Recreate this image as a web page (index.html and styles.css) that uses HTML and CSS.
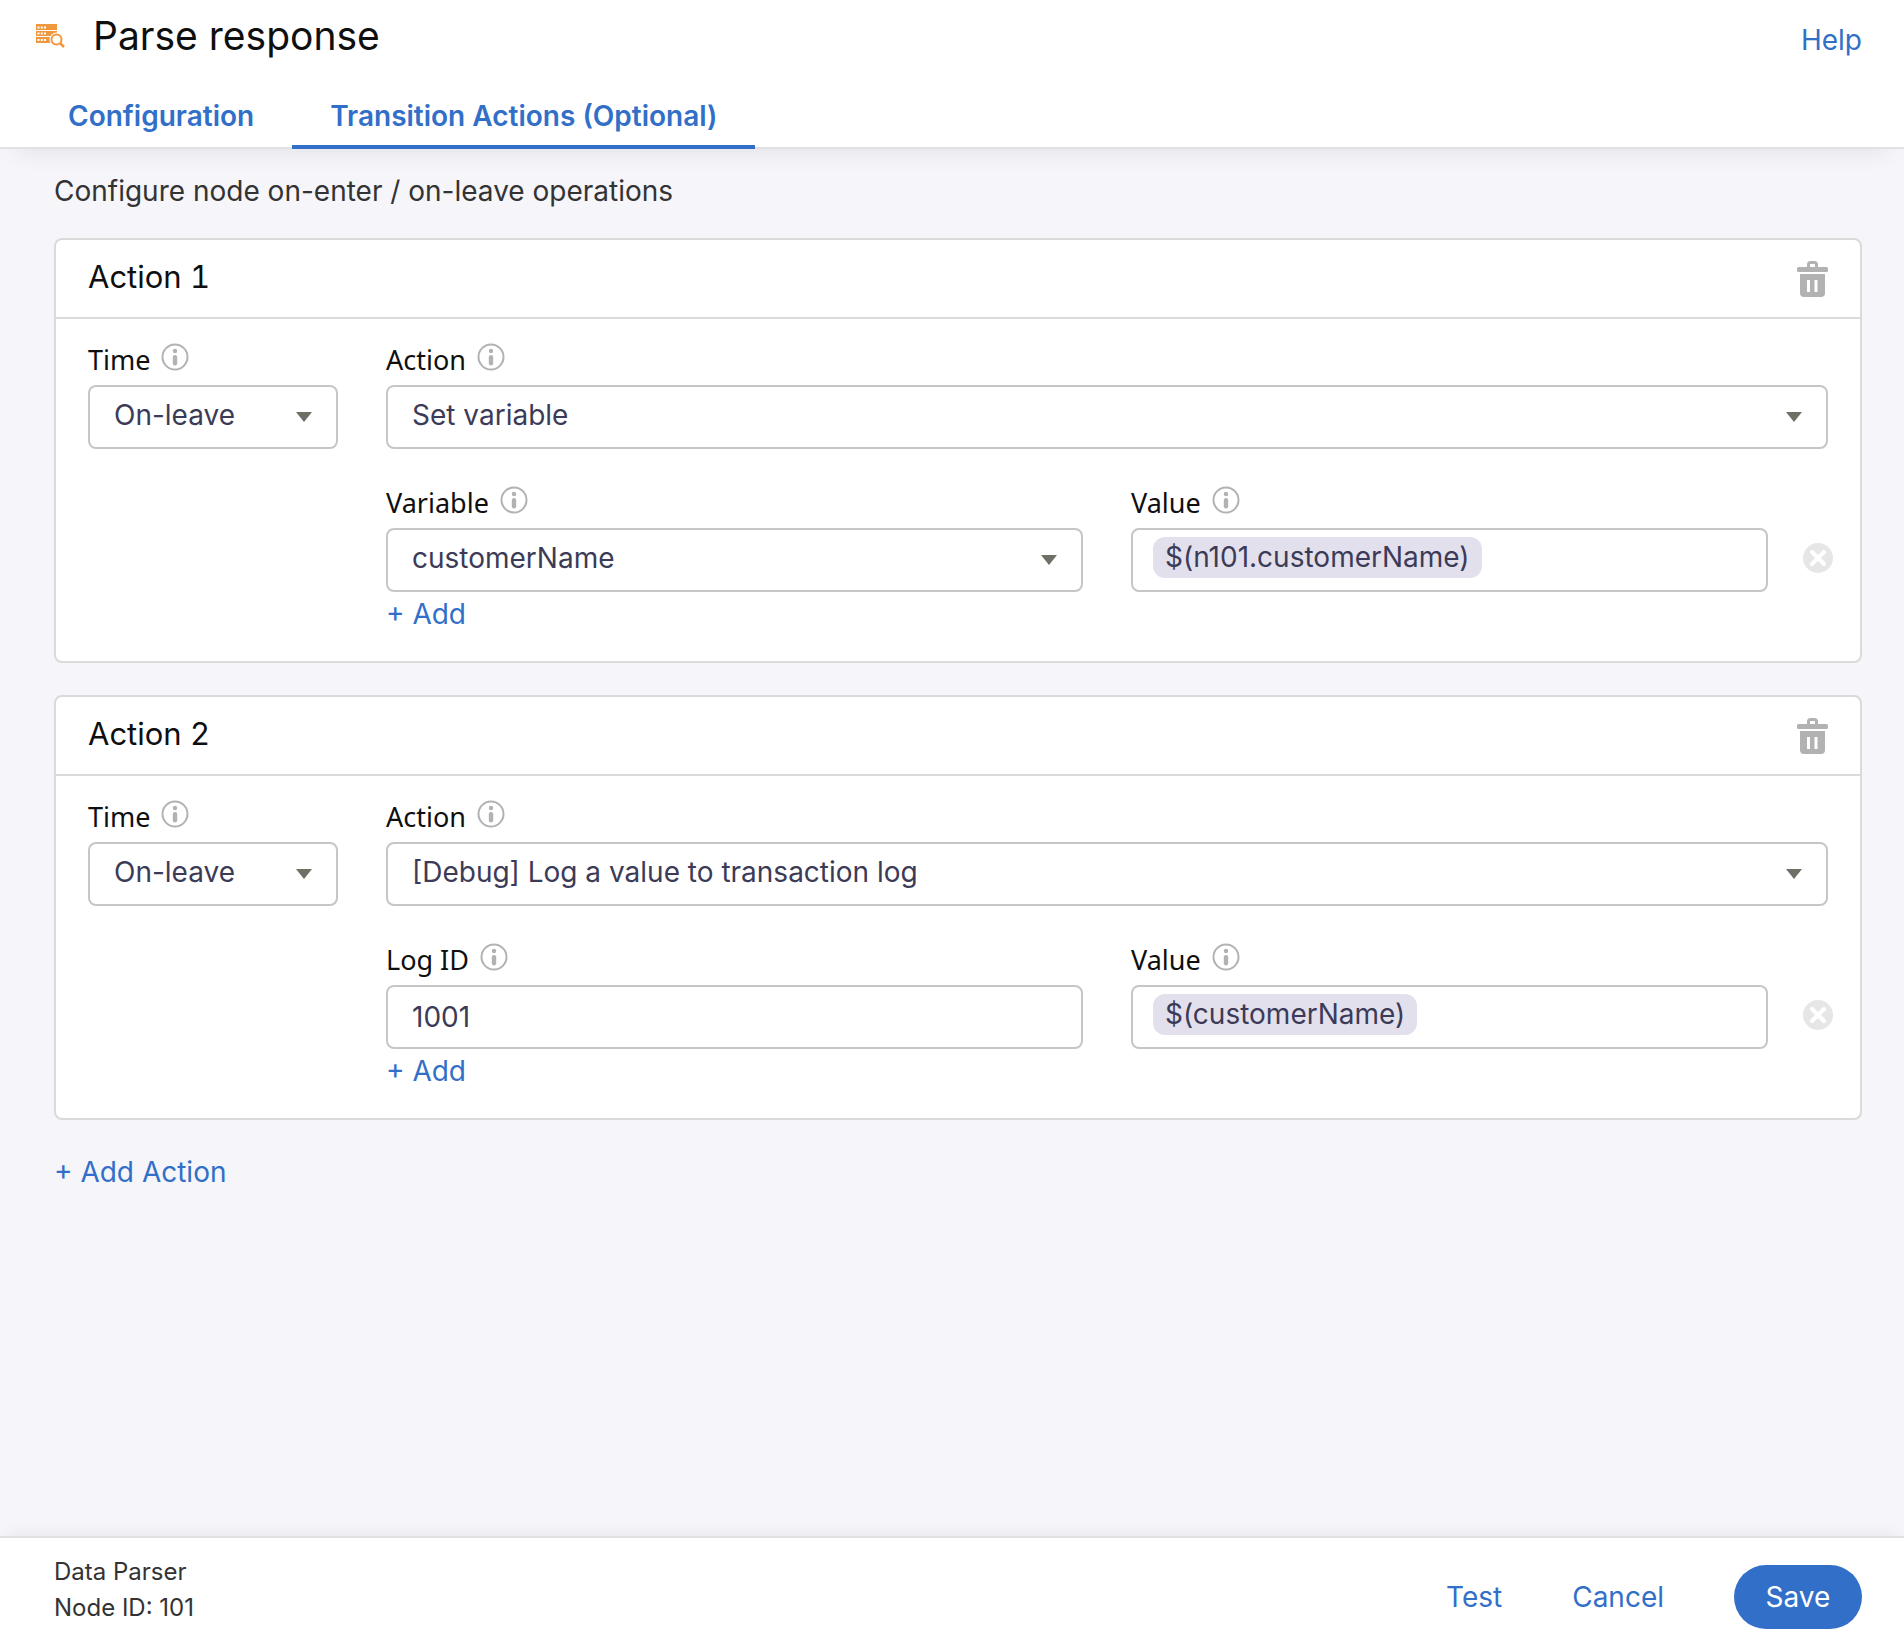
FILE: index.html
```html
<!DOCTYPE html>
<html lang="en">
<head>
<meta charset="utf-8">
<meta name="viewport" content="width=device-width, initial-scale=1">
<title>Parse response</title>
<link rel="stylesheet" href="styles.css">
</head>
<body>
<svg class="sprite" aria-hidden="true">
  <symbol id="icon-info" viewBox="0 0 28 28">
    <circle cx="14" cy="14" r="12.5" fill="none" stroke="currentColor" stroke-width="2"/>
    <circle cx="14" cy="8" r="2.2" fill="currentColor"/>
    <rect x="11.8" y="12" width="4.4" height="10.5" rx="2.2" fill="currentColor"/>
  </symbol>
  <symbol id="icon-caret" viewBox="0 0 16 10">
    <path d="M0 0h16L8 10z" fill="currentColor"/>
  </symbol>
  <symbol id="icon-trash" viewBox="0 0 31 36">
    <path fill="currentColor" fill-rule="evenodd" d="M1.5 6H10V3.500Q10 0 13.500 0H17.500Q21 0 21 3.500V6H29.500Q31 6 31 7.500V9.500Q31 11 29.500 11H1.500Q0 11 0 9.500V7.500Q0 6 1.500 6ZM13 6H18V3H13ZM3 13H28V32Q28 36 24 36H7Q3 36 3 32ZM10 19V31H13V19ZM17.500 19V31H20.500V19Z"/>
  </symbol>
  <symbol id="icon-remove" viewBox="0 0 30 30">
    <circle cx="15" cy="15" r="15" fill="currentColor"/>
    <path d="M9 9l12 12M21 9L9 21" stroke="#fff" stroke-width="4.200" stroke-linecap="round"/>
  </symbol>
</svg>

<div class="page">
  <header class="header">
    <div class="header-top">
      <svg class="node-icon" viewBox="0 0 29 24" aria-hidden="true">
        <path fill="#f0983e" d="M0 0h21v6H0zM0 7h21v3.500A7 7 0 0 0 15 12H0zM0 13h14.500a7 7 0 0 0 .5 6H0z"/>
        <path fill="#fff" d="M1.500 2.500h2v2h-2zM4.800 2.500h2v2h-2zM8 2.500h2v2H8zM1.500 8.500h2v2h-2zM4.800 8.500h2v2h-2zM8 8.500h2v2H8zM1.500 15h2v2h-2zM4.800 15h2v2h-2zM8 15h2v2H8z"/>
        <circle cx="20.500" cy="15.500" r="7" fill="#fff"/>
        <circle cx="20.500" cy="15.500" r="5" fill="none" stroke="#f0983e" stroke-width="2"/>
        <path d="M24 19l4 4" stroke="#f0983e" stroke-width="2.500"/>
      </svg>
      <h1 class="title">Parse response</h1>
      <a class="link help" href="#help">Help</a>
    </div>
    <nav class="tabs">
      <a class="tab" href="#configuration">Configuration</a>
      <a class="tab tab-active" href="#transition" aria-current="page">Transition Actions (Optional)</a>
    </nav>
  </header>

  <main class="main">
    <p class="intro">Configure node on-enter / on-leave operations</p>

    <section class="card">
      <div class="card-head">
        <h2 class="card-title">Action 1</h2>
        <button class="icon-button" type="button" aria-label="Delete action 1"><svg class="trash"><use href="#icon-trash"/></svg></button>
      </div>
      <div class="card-body">
        <div class="field">
          <div class="label-row"><label for="time1">Time</label><svg class="info"><use href="#icon-info"/></svg></div>
          <div class="select-wrap">
            <select class="control select" id="time1"><option>On-leave</option></select>
            <svg class="caret"><use href="#icon-caret"/></svg>
          </div>
        </div>
        <div class="field">
          <div class="label-row"><label for="action1">Action</label><svg class="info"><use href="#icon-info"/></svg></div>
          <div class="select-wrap">
            <select class="control select" id="action1"><option>Set variable</option></select>
            <svg class="caret"><use href="#icon-caret"/></svg>
          </div>
        </div>
        <div class="params">
          <div class="pair">
            <div class="field">
              <div class="label-row"><label for="var1">Variable</label><svg class="info"><use href="#icon-info"/></svg></div>
              <div class="select-wrap">
                <select class="control select" id="var1"><option>customerName</option></select>
                <svg class="caret"><use href="#icon-caret"/></svg>
              </div>
            </div>
            <div class="field">
              <div class="label-row"><span id="value1">Value</span><svg class="info"><use href="#icon-info"/></svg></div>
              <div class="control tokens" role="textbox" tabindex="0" aria-labelledby="value1"><span class="token">$(n101.customerName)</span></div>
            </div>
            <button class="icon-button remove" type="button" aria-label="Remove"><svg class="cross"><use href="#icon-remove"/></svg></button>
          </div>
          <button class="link add" type="button">+ Add</button>
        </div>
      </div>
    </section>

    <section class="card">
      <div class="card-head">
        <h2 class="card-title">Action 2</h2>
        <button class="icon-button" type="button" aria-label="Delete action 2"><svg class="trash"><use href="#icon-trash"/></svg></button>
      </div>
      <div class="card-body">
        <div class="field">
          <div class="label-row"><label for="time2">Time</label><svg class="info"><use href="#icon-info"/></svg></div>
          <div class="select-wrap">
            <select class="control select" id="time2"><option>On-leave</option></select>
            <svg class="caret"><use href="#icon-caret"/></svg>
          </div>
        </div>
        <div class="field">
          <div class="label-row"><label for="action2">Action</label><svg class="info"><use href="#icon-info"/></svg></div>
          <div class="select-wrap">
            <select class="control select" id="action2"><option>[Debug] Log a value to transaction log</option></select>
            <svg class="caret"><use href="#icon-caret"/></svg>
          </div>
        </div>
        <div class="params">
          <div class="pair">
            <div class="field">
              <div class="label-row"><label for="log2">Log ID</label><svg class="info"><use href="#icon-info"/></svg></div>
              <input class="control" id="log2" type="text" value="1001">
            </div>
            <div class="field">
              <div class="label-row"><span id="value2">Value</span><svg class="info"><use href="#icon-info"/></svg></div>
              <div class="control tokens" role="textbox" tabindex="0" aria-labelledby="value2"><span class="token">$(customerName)</span></div>
            </div>
            <button class="icon-button remove" type="button" aria-label="Remove"><svg class="cross"><use href="#icon-remove"/></svg></button>
          </div>
          <button class="link add" type="button">+ Add</button>
        </div>
      </div>
    </section>

    <button class="link add-action" type="button">+ Add Action</button>
  </main>

  <footer class="footer">
    <div class="meta">
      <div>Data Parser</div>
      <div>Node ID: 101</div>
    </div>
    <div class="actions">
      <button class="link" type="button">Test</button>
      <button class="link" type="button">Cancel</button>
      <button class="save" type="button">Save</button>
    </div>
  </footer>
</div>
</body>
</html>
```
FILE: styles.css
```css
* { box-sizing: border-box; }

body {
  margin: 0;
  font: 28px/40px Inter, "Liberation Sans", sans-serif;
  color: #333;
  background: #f5f5fa;
}

button, input, select { font: inherit; }
button { padding: 0; border: 0; background: none; cursor: pointer; }
h1, h2, p { margin: 0; font-weight: 400; }
svg { display: block; flex: none; }

.sprite { display: none; }

.page {
  display: flex;
  flex-direction: column;
  min-height: 100vh;
}

.link { color: #326fc8; text-decoration: none; }

/* Header */
.header {
  background: #fff;
  border-bottom: 2px solid #e1e1e3;
  box-shadow: 0 16px 24px -16px rgba(0, 0, 0, 0.1);
}

.header-top {
  display: flex;
  align-items: center;
  height: 80px;
  padding: 0 42px 8px 36px;
}

.node-icon { width: 29px; height: 24px; }

.title {
  flex: 1;
  margin-left: 28px;
  font-size: 39px;
  color: #0f0f0f;
}

.help { padding-top: 8px; }

.tabs {
  display: flex;
  height: 67px;
  padding-left: 30px;
}

.tab {
  height: 69px;
  padding: 16px 38px 0;
  border-bottom: 4px solid transparent;
  font-weight: 600;
  color: #326fc8;
  text-decoration: none;
}

.tab-active { border-bottom-color: #326fc8; }

/* Content */
.main {
  flex: 1;
  display: flex;
  flex-direction: column;
  align-items: stretch;
  gap: 32px;
  padding: 22px 42px 22px 54px;
}

.intro { margin-bottom: -5px; }

.card {
  border: 2px solid #dadada;
  border-radius: 8px;
  background: #fff;
}

.card-head {
  display: flex;
  align-items: center;
  justify-content: space-between;
  height: 79px;
  padding: 0 32px;
  border-bottom: 2px solid #dadada;
}

.card-title {
  padding-bottom: 4px;
  font-size: 31px;
  font-variant-numeric: tabular-nums;
  color: #0f0f0f;
}

.icon-button { flex: none; color: #b2b2b2; }
.trash { width: 31px; height: 36px; }

.card-body {
  display: grid;
  grid-template-columns: 250px minmax(0, 1fr);
  gap: 37px 48px;
  padding: 24px 32px 25px;
}

.label-row {
  display: flex;
  gap: 11px;
  height: 32px;
  margin-bottom: 10px;
  font-family: "Noto Sans", sans-serif;
  font-size: 27px;
  line-height: 34px;
  color: #0f0f0f;
}

.info { width: 28px; height: 28px; color: #b2b2b2; }

.control {
  display: block;
  width: 100%;
  height: 64px;
  padding: 0 24px;
  border: 2px solid #c6c6c6;
  border-radius: 8px;
  background: #fff;
  color: #3c3b57;
}

.select-wrap { display: grid; align-items: center; }

.select {
  grid-area: 1 / 1;
  appearance: none;
  padding-bottom: 4px;
}

.caret {
  grid-area: 1 / 1;
  justify-self: end;
  width: 16px;
  height: 10px;
  margin-right: 26px;
  color: #6f6f68;
  pointer-events: none;
}

.params {
  grid-column: 2;
  display: flex;
  flex-direction: column;
}

.pair {
  display: grid;
  grid-template-columns: minmax(0, 697fr) minmax(0, 637fr) 12px;
  column-gap: 48px;
}

.tokens { padding: 7px 20px; }

.token {
  display: inline-block;
  height: 41px;
  padding: 0 12px;
  border-radius: 12px;
  background: #e3e0ee;
  line-height: 41px;
}

.remove {
  align-self: end;
  justify-self: end;
  margin-right: -5px;
  padding-bottom: 19px;
  color: #e6e6e6;
}

.cross { width: 30px; height: 30px; }

.add {
  align-self: flex-start;
  height: 44px;
  line-height: 44px;
}

.add-action { align-self: flex-start; }

/* Footer */
.footer {
  display: flex;
  align-items: center;
  justify-content: space-between;
  height: 106px;
  padding: 0 42px 0 54px;
  border-top: 2px solid #e1e1e3;
  background: #fff;
  box-shadow: 0 -6px 16px -6px rgba(0, 0, 0, 0.08);
}

.meta { font-size: 24px; line-height: 36px; }

.actions { display: flex; align-items: center; gap: 70px; padding-top: 14px; }

.save {
  width: 128px;
  height: 64px;
  border-radius: 32px;
  background: #326fc8;
  color: #fff;
}
```
